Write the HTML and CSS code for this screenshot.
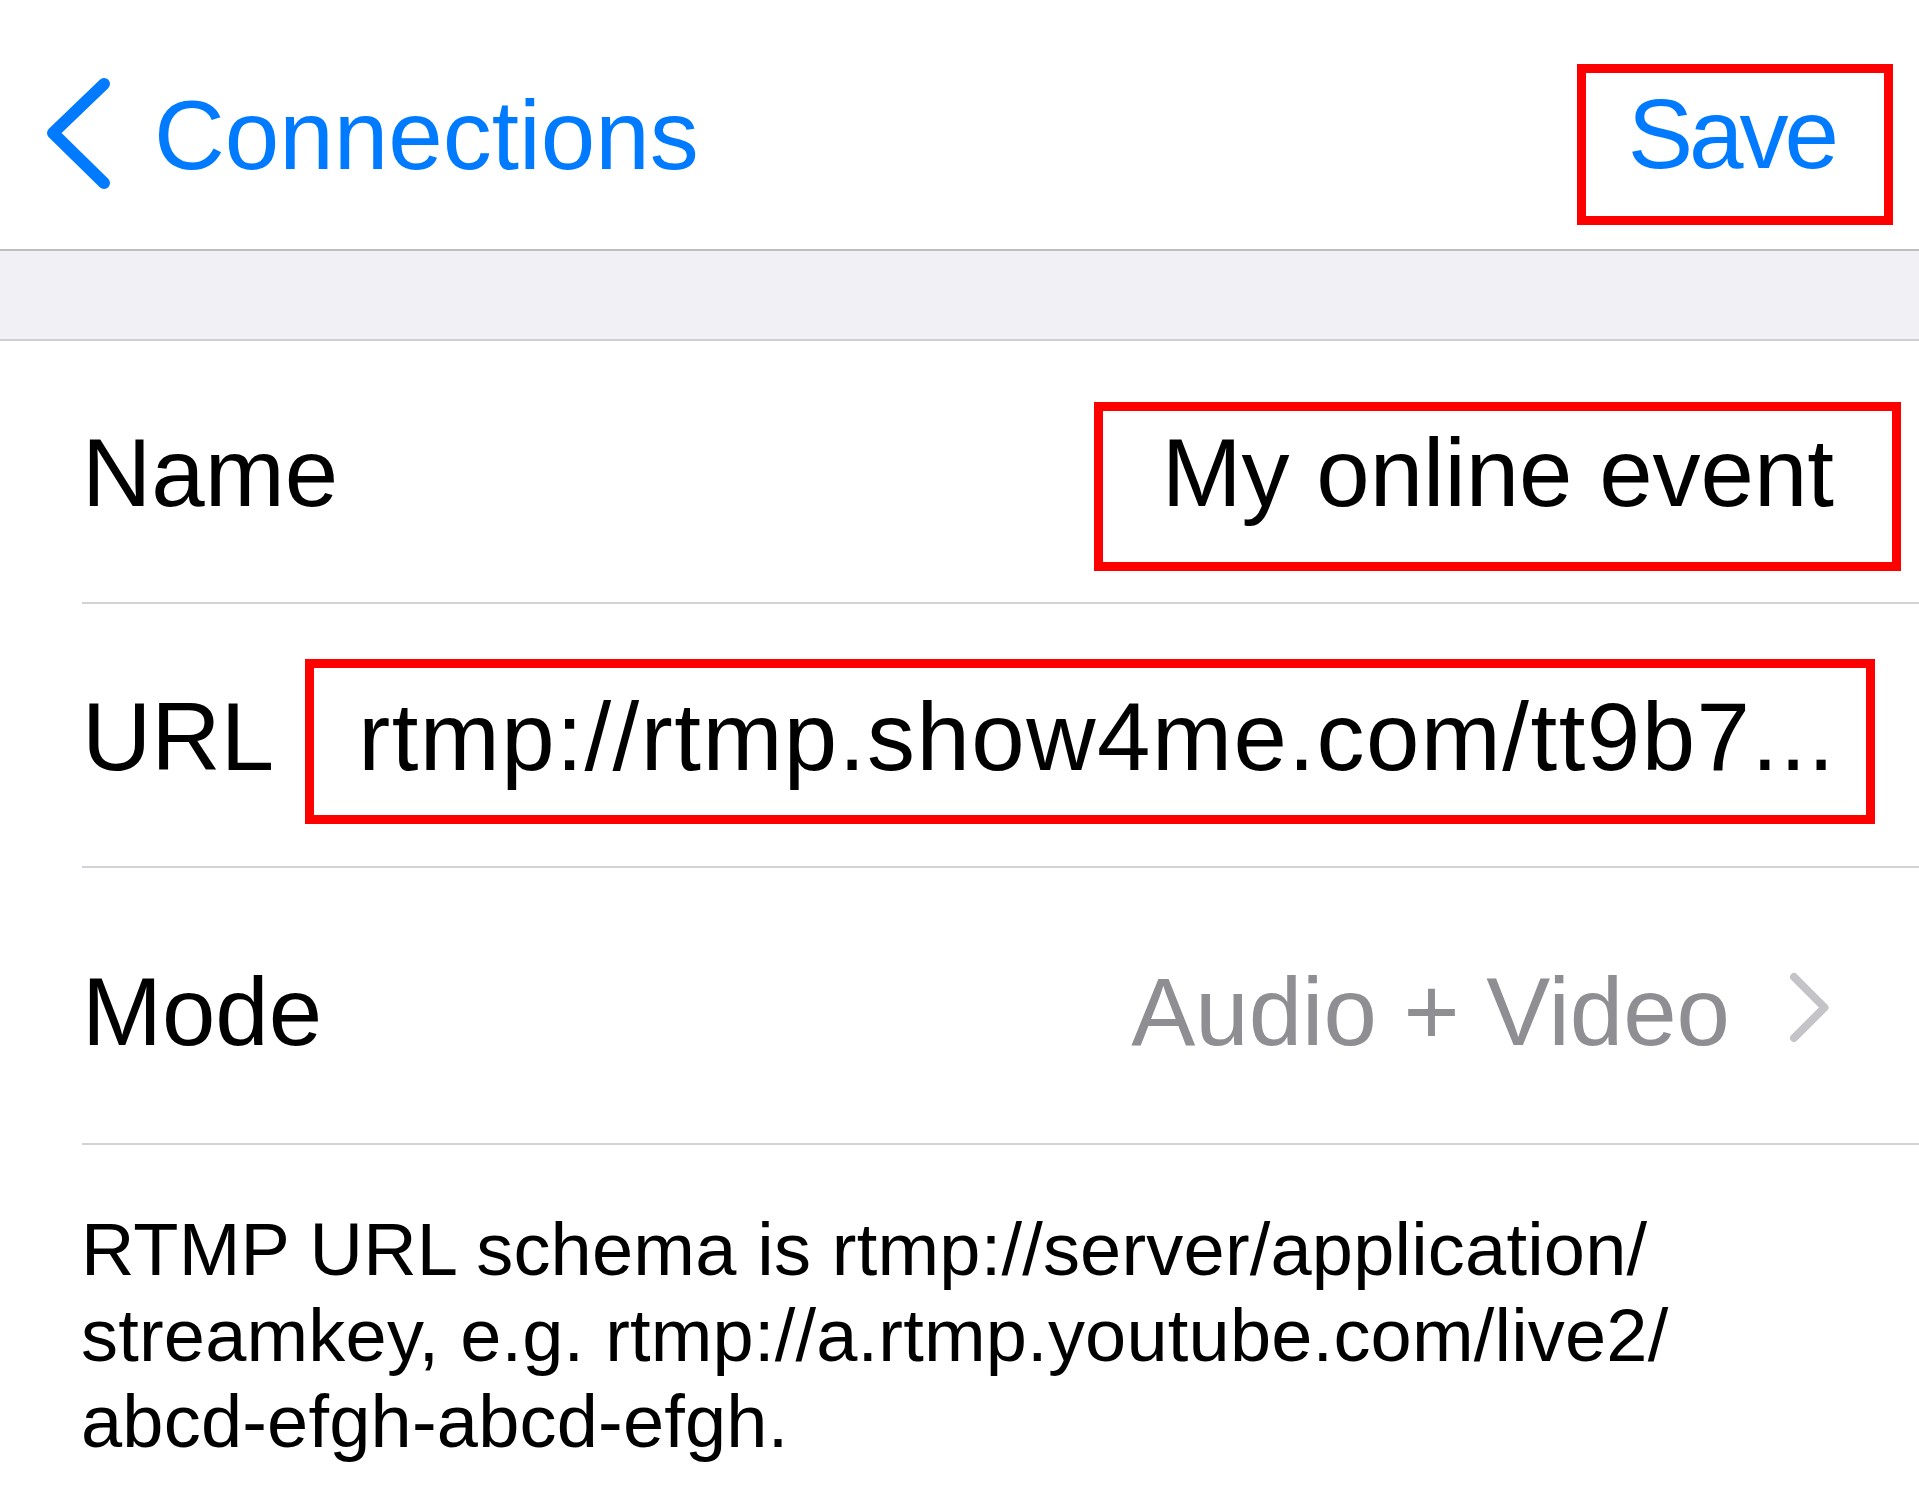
FILE: index.html
```html
<!DOCTYPE html>
<html lang="en">
<head>
<meta charset="utf-8">
<title>Connection</title>
<link rel="stylesheet" href="styles.css">
</head>
<body>
<header class="nav">
  <div class="back">
    <svg class="back-icon" width="70" height="115" viewBox="0 0 70 115" aria-hidden="true">
      <path d="M60 7 L9 56 L60 106" fill="none" stroke="#007aff" stroke-width="12" stroke-linecap="round" stroke-linejoin="round"/>
    </svg>
    <span class="back-label">Connections</span>
  </div>
  <div class="save">Save</div>
</header>
<div class="band"></div>
<main class="list">
  <div class="cell">
    <div class="cell-inner row-name">
      <span class="label">Name</span>
      <span class="value value-name">My online event</span>
    </div>
  </div>
  <div class="cell">
    <div class="cell-inner row-url">
      <span class="label">URL</span>
      <span class="value value-url">rtmp://rtmp.show4me.com/tt9b7...</span>
    </div>
  </div>
  <div class="cell">
    <div class="cell-inner row-mode">
      <span class="label">Mode</span>
      <span class="detail">
        <span class="detail-text">Audio + Video</span>
        <svg class="disclosure" width="45" height="72" viewBox="0 0 45 72" aria-hidden="true">
          <path d="M5 5 L35.5 35.5 L5 66" fill="none" stroke="#c4c4c8" stroke-width="8" stroke-linecap="round" stroke-linejoin="round"/>
        </svg>
      </span>
    </div>
  </div>
</main>
<footer class="footer">
  RTMP URL schema is rtmp://server/application/<br>streamkey, e.g. rtmp://a.rtmp.youtube.com/live2/<br>abcd-efgh-abcd-efgh.
</footer>
</body>
</html>
```
FILE: styles.css
```css
html, body {
  margin: 0;
  padding: 0;
  background: #ffffff;
}

body {
  font-family: "Liberation Sans", Arial, sans-serif;
  color: #000000;
  width: 1919px;
}

.nav {
  box-sizing: border-box;
  height: 251px;
  padding: 64px 26px 0 44px;
  display: flex;
  justify-content: space-between;
  align-items: flex-start;
  border-bottom: 2px solid #bdbdc1;
  background: #ffffff;
}

.back {
  display: flex;
  align-items: center;
  margin-top: 13px;
  color: #007aff;
  font-size: 98px;
  line-height: 110px;
}

.back-icon {
  display: block;
  flex: none;
}

.back-label {
  margin-left: 40px;
}

.save {
  color: #007aff;
  font-size: 98px;
  line-height: 110px;
  letter-spacing: -4px;
  border: 9px solid #ff0000;
  padding: 6px 49px 27px 42px;
}

.band {
  height: 88px;
  background: #f0f0f5;
  border-bottom: 2px solid #cfcfd3;
}

.list {
  display: flex;
  flex-direction: column;
}

.cell {
  padding-left: 82px;
}

.cell-inner {
  display: flex;
  align-items: baseline;
  justify-content: space-between;
  padding-right: 85px;
  border-bottom: 2px solid #d3d3d7;
  font-size: 96px;
  line-height: 110px;
}

.row-name {
  padding-top: 61px;
  padding-bottom: 31px;
}

.row-url {
  padding-top: 55px;
  padding-bottom: 42px;
}

.row-mode {
  padding-top: 89px;
  padding-bottom: 76px;
}

.label {
  flex: none;
  white-space: nowrap;
}

.value {
  white-space: nowrap;
}

.value-name {
  border: 9px solid #ff0000;
  padding: 7px 58px 34px 59px;
  margin-right: -67px;
}

.value-url {
  flex: 1;
  min-width: 0;
  overflow: hidden;
  text-align: right;
  letter-spacing: 1.5px;
  border: 9px solid #ff0000;
  padding: 14px 30px 23px 44px;
  margin-left: 31px;
  margin-right: -41px;
}

.detail {
  display: flex;
  align-items: center;
  color: #8e8e93;
  white-space: nowrap;
}

.disclosure {
  display: block;
  flex: none;
  margin-left: 59px;
  margin-bottom: 8px;
}

.footer {
  padding: 62px 85px 0 81px;
  font-size: 74px;
  line-height: 86px;
  letter-spacing: 0.2px;
  color: #000000;
}
```
